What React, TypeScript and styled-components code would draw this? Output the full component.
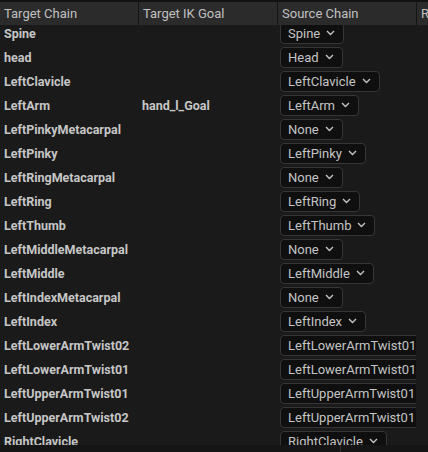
import React, { useLayoutEffect, useRef } from "react";
import styled, { createGlobalStyle } from "styled-components";

const Global = createGlobalStyle`
  html, body { margin: 0; padding: 0; background: #1a1a1a; }
  * { box-sizing: border-box; }
`;

const Root = styled.div`
  width: 428px;
  height: 452px;
  display: flex;
  flex-direction: column;
  background: #1a1a1a;
  font-family: Roboto, "Liberation Sans", sans-serif;
  overflow: hidden;
`;

const TopStrip = styled.div`
  height: 2px;
  background: #121212;
  flex: none;
`;

const Header = styled.div`
  height: 23px;
  flex: none;
  display: grid;
  grid-template-columns: 138px 139px 139px 1fr;
  background: #2b2b2b;
`;

const HeadCell = styled.div<{ $first?: boolean }>`
  display: flex;
  align-items: center;
  padding-left: ${(p) => (p.$first ? "4px" : "4px")};
  border-left: ${(p) => (p.$first ? "none" : "1px solid #151515")};
  color: #c0c0c0;
  font-size: 13px;
  white-space: nowrap;
  overflow: hidden;
`;

const Body = styled.div`
  flex: 1;
  overflow: hidden;
`;

const Row = styled.div`
  height: 24px;
  display: grid;
  grid-template-columns: 138px 139px 139px 1fr;
  align-items: center;
`;

const Label = styled.div<{ $pad: number }>`
  padding-left: ${(p) => p.$pad}px;
  color: #c6c6c6;
  font-size: 12.5px;
  font-weight: 700;
  white-space: nowrap;
  overflow: hidden;
`;

const SourceCell = styled.div`
  padding-left: 3px;
  overflow: hidden;
  display: flex;
`;

const Dropdown = styled.div`
  height: 21px;
  display: inline-flex;
  align-items: center;
  gap: 6px;
  padding: 0 8px 0 7px;
  background: #0f0f0f;
  border: 1px solid #363636;
  border-radius: 4px;
  color: #c4c4c4;
  font-size: 13px;
  white-space: nowrap;
  flex: none;
`;

const Footer = styled.div`
  height: 7px;
  flex: none;
  display: grid;
  grid-template-columns: 340px 1fr;
  background: #151515;
`;

const FooterPart = styled.div<{ $divider?: boolean }>`
  border-left: ${(p) => (p.$divider ? "1px solid #2e2e2e" : "none")};
`;

const Chevron = () => (
  <svg width="9" height="6" viewBox="0 0 9 6" fill="none">
    <path d="M1 1l3.5 3.5L8 1" stroke="#c4c4c4" strokeWidth="1.4" />
  </svg>
);

const rows: [string, string, string, boolean][] = [
  ["Spine", "", "Spine", true],
  ["head", "", "Head", true],
  ["LeftClavicle", "", "LeftClavicle", true],
  ["LeftArm", "hand_l_Goal", "LeftArm", true],
  ["LeftPinkyMetacarpal", "", "None", true],
  ["LeftPinky", "", "LeftPinky", true],
  ["LeftRingMetacarpal", "", "None", true],
  ["LeftRing", "", "LeftRing", true],
  ["LeftThumb", "", "LeftThumb", true],
  ["LeftMiddleMetacarpal", "", "None", true],
  ["LeftMiddle", "", "LeftMiddle", true],
  ["LeftIndexMetacarpal", "", "None", true],
  ["LeftIndex", "", "LeftIndex", true],
  ["LeftLowerArmTwist02", "", "LeftLowerArmTwist01", true],
  ["LeftLowerArmTwist01", "", "LeftLowerArmTwist01", true],
  ["LeftUpperArmTwist01", "", "LeftUpperArmTwist01", true],
  ["LeftUpperArmTwist02", "", "LeftUpperArmTwist01", true],
  ["RightClavicle", "", "RightClavicle", true],
];

export default function App() {
  const bodyRef = useRef<HTMLDivElement>(null);
  useLayoutEffect(() => {
    if (bodyRef.current) bodyRef.current.scrollTop = 4;
  }, []);
  return (
    <Root>
      <Global />
      <TopStrip />
      <Header>
        <HeadCell $first>Target Chain</HeadCell>
        <HeadCell>Target IK Goal</HeadCell>
        <HeadCell>Source Chain</HeadCell>
        <HeadCell>Root</HeadCell>
      </Header>
      <Body ref={bodyRef}>
        {rows.map(([t, g, s], i) => (
          <Row key={i}>
            <Label $pad={4}>{t}</Label>
            <Label $pad={4}>{g}</Label>
            <SourceCell>
              <Dropdown>
                {s}
                <Chevron />
              </Dropdown>
            </SourceCell>
            <div />
          </Row>
        ))}
      </Body>
      <Footer>
        <FooterPart />
        <FooterPart $divider />
      </Footer>
    </Root>
  );
}
